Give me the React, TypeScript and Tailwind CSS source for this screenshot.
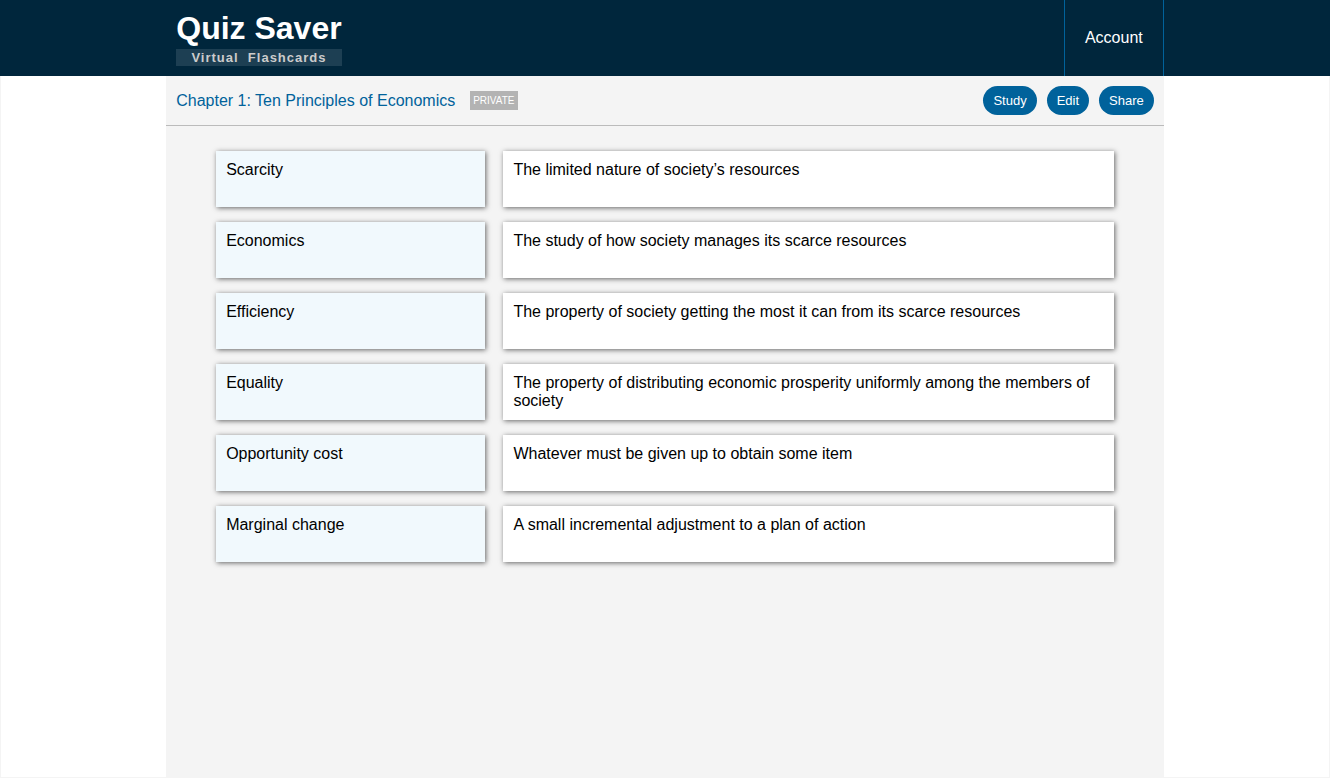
const cards = [
  { term: "Scarcity", definition: "The limited nature of society’s resources" },
  { term: "Economics", definition: "The study of how society manages its scarce resources" },
  { term: "Efficiency", definition: "The property of society getting the most it can from its scarce resources" },
  {
    term: "Equality",
    definition: "The property of distributing economic prosperity uniformly among the members of society",
  },
  { term: "Opportunity cost", definition: "Whatever must be given up to obtain some item" },
  { term: "Marginal change", definition: "A small incremental adjustment to a plan of action" },
];

const actions = ["Study", "Edit", "Share"];

function Header() {
  return (
    <header className="bg-[#00263c] text-white">
      <div className="mx-auto flex w-3/4 items-stretch justify-between pl-2.5">
        <a href="#home" className="flex flex-col pt-2 pb-2.5">
          <span className="text-[32px] leading-10 font-bold">Quiz Saver</span>
          <span className="mt-px bg-[#1d3f53] text-center text-[13px] leading-[17px] font-bold tracking-[1px] whitespace-pre text-[#cccccc]">
            Virtual{"  "}Flashcards
          </span>
        </a>
        <nav className="flex">
          <a
            href="#account"
            className="flex items-center border-x border-[#00629b] px-5 text-base"
          >
            Account
          </a>
        </nav>
      </div>
    </header>
  );
}

function DeckBar() {
  return (
    <div className="flex items-center justify-between border-b border-[#bbbbbb] px-2.5 py-2.5">
      <div className="flex items-center gap-[15px]">
        <h1 className="text-base leading-[18px] text-[#00629b]">
          Chapter 1: Ten Principles of Economics
        </h1>
        <span className="bg-[#b3b3b3] px-[3px] text-[10px] leading-[19px] text-white">
          PRIVATE
        </span>
      </div>
      <div className="flex gap-2.5">
        {actions.map((label) => (
          <button
            key={label}
            type="button"
            className="rounded-full bg-[#00629b] px-2.5 py-[7px] text-[13px] leading-[15px] text-white"
          >
            {label}
          </button>
        ))}
      </div>
    </div>
  );
}

export default function App() {
  return (
    <div className="flex min-h-screen flex-col bg-white font-['Liberation_Sans',Arial,sans-serif] text-black">
      <Header />
      <div className="flex grow flex-col shadow-[inset_1px_0_#f4f4f4,inset_-1px_-1px_#f4f4f4]">
        <main className="mx-auto w-3/4 grow bg-[#f4f4f4]">
          <DeckBar />
          <dl className="flex flex-col gap-[15px] px-[5%] pt-[25px] pb-6">
            {cards.map((card) => (
              <div key={card.term} className="flex justify-between text-base leading-[18px]">
                <dt className="min-h-14 w-[30%] bg-[#f1f9fd] p-2.5 shadow-[1px_1px_5px_#666666]">
                  {card.term}
                </dt>
                <dd className="min-h-14 w-[68%] bg-white p-2.5 shadow-[1px_1px_5px_#666666]">
                  {card.definition}
                </dd>
              </div>
            ))}
          </dl>
        </main>
      </div>
    </div>
  );
}
